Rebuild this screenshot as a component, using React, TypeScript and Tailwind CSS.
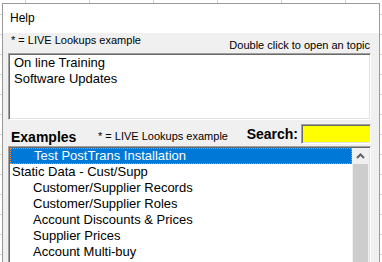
const font = { fontFamily: '"Liberation Sans", Arial, sans-serif' };

const helpTopics = ['On line Training', 'Software Updates'];

const examples: { text: string; indent: boolean }[] = [
  { text: 'Static Data - Cust/Supp', indent: false },
  { text: 'Customer/Supplier Records', indent: true },
  { text: 'Customer/Supplier Roles', indent: true },
  { text: 'Account Discounts & Prices', indent: true },
  { text: 'Supplier Prices', indent: true },
  { text: 'Account Multi-buy', indent: true },
];

const sunken =
  'border-l border-t border-r border-b border-l-[#a0a0a0] border-t-[#a0a0a0] border-r-[#ffffff] border-b-[#ffffff] shadow-[inset_1px_1px_0_#696969,inset_-1px_-1px_0_#e3e3e3]';

function ScrollBar() {
  return (
    <div className="flex w-[17px] shrink-0 flex-col bg-[#f0f0f0]">
      <div className="flex h-[16px] items-center justify-center">
        <svg width="9" height="6" viewBox="0 0 9 6">
          <polyline points="1,5 4.5,1.5 8,5" fill="none" stroke="#606060" strokeWidth="2" />
        </svg>
      </div>
      <div className="ml-[1px] mr-[1px] flex-1 bg-[#cdcdcd]" />
    </div>
  );
}

export default function App() {
  return (
    <div
      className="h-[262px] w-[382px] overflow-hidden bg-white bg-[linear-gradient(90deg,#d4d4d4_1px,transparent_1px),linear-gradient(180deg,#d4d4d4_1px,transparent_1px)] bg-size-[64px_20px] bg-position-[25px_14px] pl-[2px] pt-[3px] text-black"
      style={font}
    >
      <div className="flex h-[270px] w-[378px] flex-col border-l border-r border-t border-[#9a9a9a]">
        <div className="h-[29px] shrink-0 bg-white pl-[7px] pt-[7px] text-[12px] leading-[14px]">
          Help
        </div>
        <div className="flex flex-1 flex-col bg-[#f0f0f0] pl-[5px] pr-[8px]">
          <div className="flex h-[20px] shrink-0 text-[11px] leading-[13px]">
            <span className="ml-[3px] mt-[1px]">* = LIVE Lookups example</span>
            <span className="ml-auto mr-[1px] mt-[6px]">Double click to open an topic</span>
          </div>

          <div className={`h-[67px] shrink-0 bg-white pl-[5px] pt-[1px] text-[13px] leading-[16px] ${sunken}`}>
            {helpTopics.map((t) => (
              <div key={t}>{t}</div>
            ))}
          </div>

          <div className="flex h-[26px] shrink-0 items-start">
            <span className="ml-[3px] mt-[9px] w-[87px] text-[14px] font-bold leading-[16px]">Examples</span>
            <span className="mt-[10px] text-[11px] leading-[13px]">* = LIVE Lookups example</span>
            <span className="ml-auto mt-[6px] text-[14px] font-bold leading-[16px]">Search:</span>
            <div className={`ml-[3px] mt-[4px] h-[20px] w-[70px] bg-[#ffff00] ${sunken}`} />
          </div>

          <div className={`flex flex-1 bg-white p-[1px] ${sunken}`}>
            <div className="flex-1 text-[13px] leading-[16px]">
              <div className="h-[16px] border border-dotted border-[#ff8728] bg-[#0078d7] pl-[23px] leading-[14px] text-white">
                Test PostTrans Installation
              </div>
              {examples.map((e) => (
                <div key={e.text} className={e.indent ? 'pl-[23px]' : 'pl-[2px]'}>
                  {e.text}
                </div>
              ))}
            </div>
            <ScrollBar />
          </div>
        </div>
      </div>
    </div>
  );
}
